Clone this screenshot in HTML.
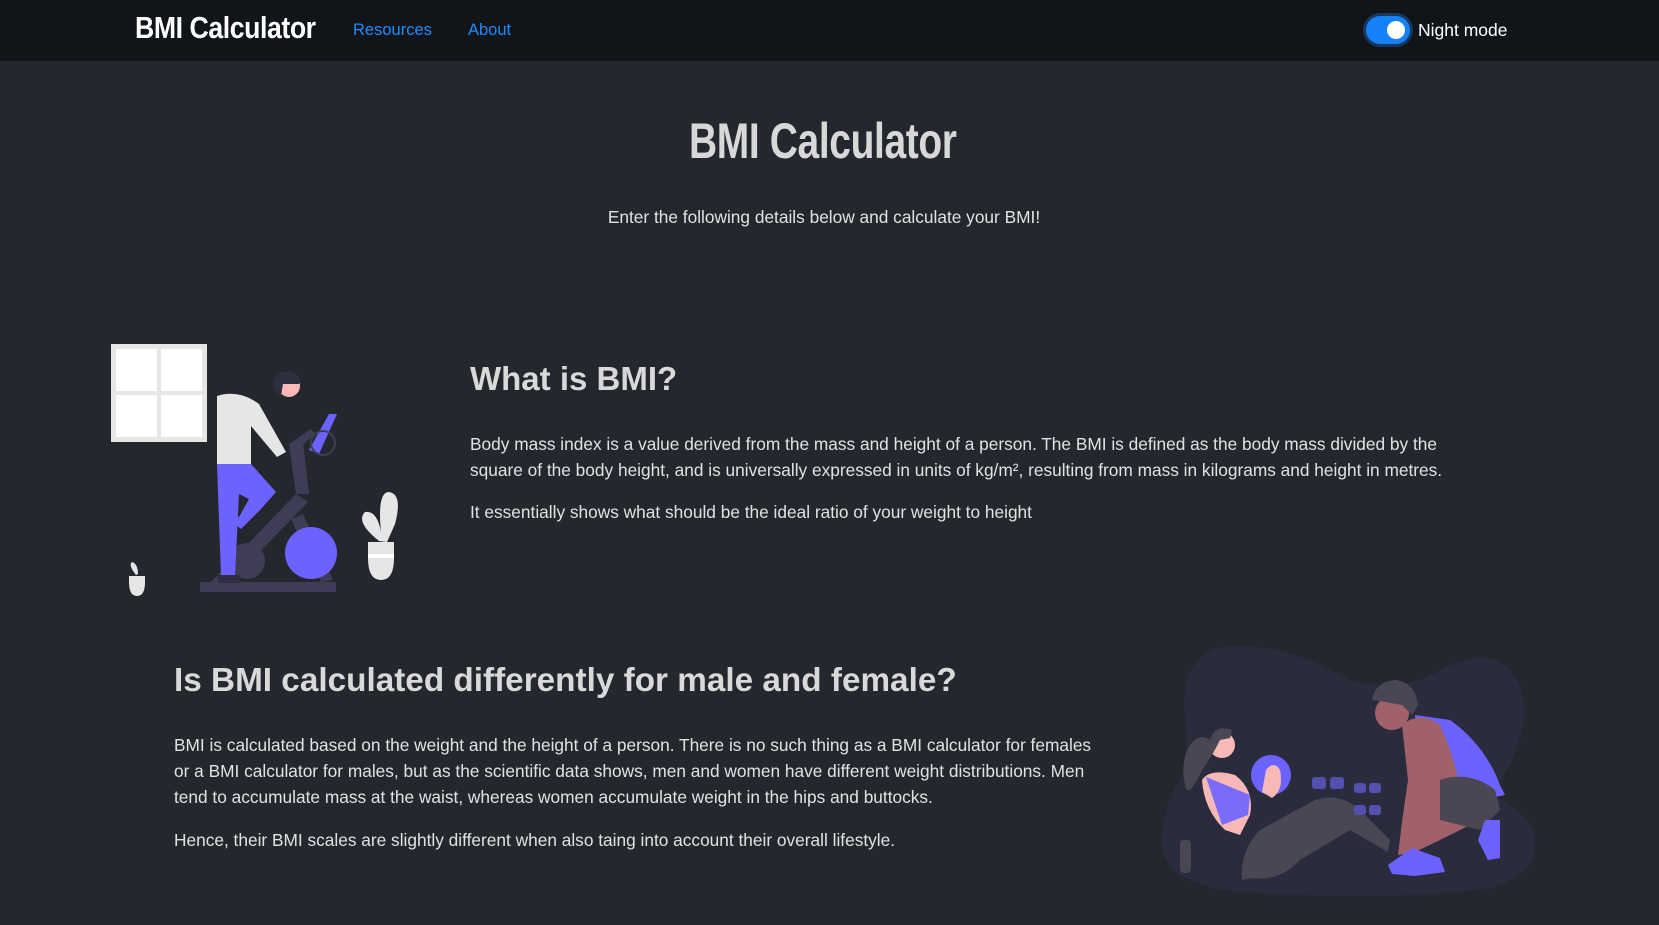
<!DOCTYPE html>
<html><head><meta charset="utf-8"><style>
*{margin:0;padding:0;box-sizing:border-box}
body{width:1659px;height:925px;overflow:hidden;background:#24272d;color:#e6e6e6;font-family:"Liberation Sans",sans-serif;position:relative}
nav{position:absolute;left:0;top:0;width:1659px;height:61px;background:#111418}
.abs{position:absolute;white-space:nowrap}
.brand{font-weight:bold;font-size:31px;color:#fff;transform:scaleX(.86);transform-origin:left center;letter-spacing:-.5px}
.link{color:#1e8cff;font-size:16.5px}
.toggle{left:1366px;top:16px;width:44px;height:28px;border-radius:14px;background:#1682f9;box-shadow:0 0 0 3px #17395f}
.toggle:after{content:"";position:absolute;right:5px;top:5px;width:18px;height:18px;border-radius:50%;background:#fff}
p{font-size:17.3px;color:#e2e2e2}
h2{font-weight:bold;color:#d9d9d9}
</style></head><body>
<nav>
<div class="abs brand" style="left:135px;top:10px">BMI Calculator</div>
<div class="abs link" style="left:353px;top:21px">Resources</div>
<div class="abs link" style="left:468px;top:21px">About</div>
<div class="abs toggle"></div>
<div class="abs" style="left:1418px;top:20px;font-size:17.5px;color:#fff">Night mode</div>
</nav>
<div class="abs brand" style="left:689px;top:112px;font-size:50px;color:#d8d8d8;transform:scaleX(.78)">BMI Calculator</div>
<p class="abs" style="left:0;width:1648px;text-align:center;top:207px;font-size:17.3px">Enter the following details below and calculate your BMI!</p>

<svg class="abs" style="left:111px;top:344px" width="300" height="254" viewBox="0 0 300 254">
<rect x="0" y="0" width="96" height="98" fill="#e6e6e6"/>
<rect x="5" y="5" width="41" height="42" fill="#fff"/><rect x="50" y="5" width="41" height="42" fill="#fff"/>
<rect x="5" y="51" width="41" height="42" fill="#fff"/><rect x="50" y="51" width="41" height="42" fill="#fff"/>
<rect x="89" y="238" width="136" height="10" fill="#3f3d56"/>
<path d="M100 238 L185 150 L197 158 L112 246Z" fill="#3f3d56"/>
<path d="M185 150 L178 100 L192 98 L198 150Z" fill="#3f3d56"/>
<path d="M178 100 L200 85 L204 90 L186 106Z" fill="#3f3d56"/>
<path d="M180 175 L210 238 L222 236 L192 170Z" fill="#3f3d56"/>
<circle cx="200" cy="209" r="26" fill="#6c63ff"/>
<circle cx="136" cy="217" r="18" fill="#3f3d56"/>
<rect x="110" y="172" width="20" height="6" fill="#3f3d56"/>
<path d="M106 52 Q128 45 148 60 L175 108 L166 113 L140 82 L140 120 L106 120Z" fill="#e6e6e6"/>
<path d="M106 120 L140 120 L165 148 L150 165 L130 185 L124 180 L138 155 L128 150 L124 232 L110 232Z" fill="#6c63ff"/>
<rect x="107" y="231" width="22" height="8" fill="#2f2e41"/>
<circle cx="178" cy="42" r="11" fill="#ffb8b8"/>
<path d="M163 45 Q160 28 177 27 Q192 30 188 40 L172 40 L170 52Z" fill="#2f2e41"/>
<path d="M198 106 L218 70 L226 70 L208 110Z" fill="#6c63ff"/>
<circle cx="212" cy="99" r="12" fill="none" stroke="#3f3d56" stroke-width="2"/>
<path d="M18 232 h16 v6 q0 14 -8 14 q-8 0 -8 -14z" fill="#e6e6e6"/>
<path d="M25 231 q-8 -10 -4 -13 q6 2 6 12z" fill="#e6e6e6"/>
<path d="M257 198 h26 v16 q0 22 -13 22 q-13 0 -13 -22z" fill="#e6e6e6"/>
<rect x="257" y="210" width="26" height="4" fill="#fff"/>
<path d="M268 197 Q244 178 254 168 Q266 166 270 188 Q266 148 278 148 Q292 150 284 180 L276 198Z" fill="#e6e6e6"/>
</svg>

<h2 class="abs" style="left:470px;top:360px;font-size:33px">What is BMI?</h2>
<p class="abs" style="left:470px;top:431px;line-height:26px">Body mass index is a value derived from the mass and height of a person. The BMI is defined as the body mass divided by the<br>square of the body height, and is universally expressed in units of kg/m², resulting from mass in kilograms and height in metres.</p>
<p class="abs" style="left:470px;top:502px">It essentially shows what should be the ideal ratio of your weight to height</p>

<h2 class="abs" style="left:174px;top:662px;font-size:33.3px">Is BMI calculated differently for male and female?</h2>
<p class="abs" style="left:174px;top:732px;line-height:26px">BMI is calculated based on the weight and the height of a person. There is no such thing as a BMI calculator for females<br>or a BMI calculator for males, but as the scientific data shows, men and women have different weight distributions. Men<br>tend to accumulate mass at the waist, whereas women accumulate weight in the hips and buttocks.</p>
<p class="abs" style="left:174px;top:830px">Hence, their BMI scales are slightly different when also taing into account their overall lifestyle.</p>

<svg class="abs" style="left:1140px;top:620px" width="519" height="305" viewBox="0 0 519 305">
<path d="M80 27 Q140 20 210 60 Q260 75 300 50 Q340 30 360 42 Q390 60 382 110 Q372 150 350 175 Q380 185 395 215 Q400 255 350 268 Q250 282 100 272 Q30 265 22 230 Q20 190 40 160 Q50 130 45 100 Q38 40 80 27Z" fill="#2a2c3e"/>
<rect x="40" y="220" width="11" height="33" rx="4" fill="#4a4653"/>
<path d="M102 260 Q100 230 120 210 L175 180 Q200 172 220 190 L250 220 L248 232 L210 210 L160 240 Q140 262 110 258Z" fill="#4a4653"/>
<path d="M62 160 Q70 148 95 155 Q115 170 110 195 L100 215 L85 210 Q64 190 62 160Z" fill="#f7b8b7"/>
<path d="M66 157 L110 175 L108 195 L82 205 Z" fill="#6c63ff" opacity=".9"/>
<circle cx="131" cy="155" r="20" fill="#6c63ff"/>
<path d="M126 150 q8 -10 14 0 q4 20 -8 28 l-10 -6z" fill="#f7b8b7"/>
<circle cx="82" cy="125" r="13" fill="#f7b8b7"/>
<path d="M70 120 Q75 104 92 110 L90 118 L80 120 Q70 140 62 150 Q48 180 45 165 Q40 140 50 125 Q60 112 70 120Z" fill="#4a4653"/>
<g fill="#5450b0"><rect x="172" y="157" width="14" height="12" rx="3"/><rect x="190" y="157" width="14" height="12" rx="3"/><rect x="214" y="163" width="12" height="10" rx="3"/><rect x="229" y="163" width="12" height="10" rx="3"/><rect x="214" y="185" width="12" height="10" rx="3"/><rect x="229" y="185" width="12" height="10" rx="3"/></g>
<circle cx="252" cy="93" r="17" fill="#a0616a"/>
<path d="M232 80 Q235 62 255 60 Q275 62 278 85 L272 95 L262 85 L245 82Z" fill="#4a4653"/>
<path d="M275 95 L310 100 Q345 125 360 165 L365 175 L340 180 L285 160Z" fill="#6c63ff"/>
<path d="M262 105 Q280 90 300 105 Q320 150 320 180 L340 200 L300 220 L275 232 L258 235 Q262 200 268 160Z" fill="#a0616a"/>
<path d="M300 160 Q330 150 355 170 L360 190 L340 210 L300 200Z" fill="#4a4653"/>
<path d="M248 245 L272 228 L300 238 L305 252 L275 256 L252 254Z" fill="#6c63ff"/>
<path d="M345 200 L360 200 L360 238 L348 240 L338 220Z" fill="#6c63ff"/>
</svg>
</body></html>
